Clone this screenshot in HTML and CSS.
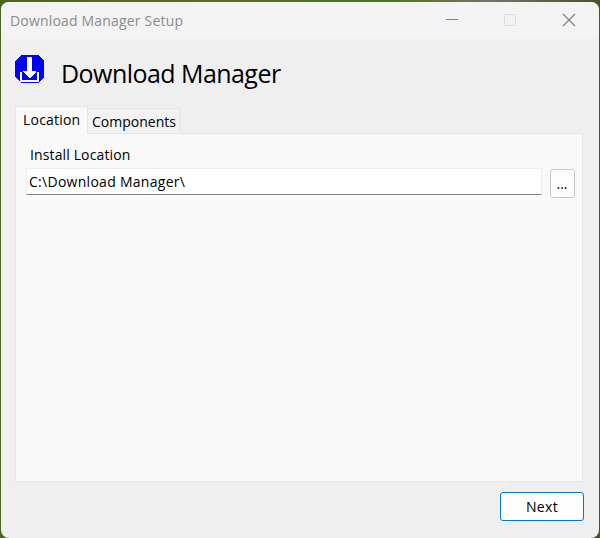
FILE: index.html
```html
<!DOCTYPE html>
<html lang="en">
<head>
<meta charset="utf-8">
<title>Download Manager Setup</title>
<link rel="stylesheet" href="styles.css">
</head>
<body>
<main class="window">
  <header class="titlebar">
    <span class="caption">Download Manager Setup</span>
    <svg class="controls" width="140" height="20" viewBox="0 0 140 20">
      <path d="M6 9.5H18" stroke="#858585"/>
      <rect x="64.5" y="4.500" width="11" height="11" rx="1" fill="none" stroke="#dcdcdc"/>
      <path d="M123 4L135 16M135 4L123 16" stroke="#818181" stroke-width="1.2"/>
    </svg>
  </header>
  <section class="brand">
    <svg class="logo" width="29" height="28" viewBox="0 0 29 28" shape-rendering="crispEdges">
      <path d="M6 0H23L29 6V22L23 28H6L0 22V6Z" fill="#00f"/>
      <path d="M12 2H17V16H21V17L15 23H14L8 17V16H12Z" fill="#fff"/>
      <path d="M5 17H7V25H22V17H24V27H5Z" fill="#fff"/>
    </svg>
    <h1 class="product">Download Manager</h1>
  </section>
  <nav class="tabs">
    <div class="tab active"><span class="tab-text">Location</span></div>
    <div class="tab"><span>Components</span></div>
  </nav>
  <section class="panel">
    <div class="label">Install Location</div>
    <div class="row">
      <div class="field"><span class="path-text">C:\Download Manager\</span></div>
      <button class="browse">...</button>
    </div>
  </section>
  <footer class="footer"><button class="next">Next</button></footer>
</main>
</body>
</html>
```
FILE: styles.css
```css
* { box-sizing: border-box; }
body {
  margin: 0;
  height: 538px;
  padding: 2px 1px 0;
  overflow: hidden;
  background: linear-gradient(90deg, #4c6420 0%, #5a6b2d 35%, #4f751b 65%, #77716a 82%, #45532c 100%);
  font: 14px/20px "Open Sans", "Noto Sans", sans-serif;
  color: #000;
}
.window {
  width: 598px;
  height: 536px;
  border-radius: 8px;
  background: #efefef;
  overflow: hidden;
}
.titlebar {
  display: flex;
  justify-content: space-between;
  height: 37px;
  padding: 8px 19px 0 9px;
  background: #f3f3f3;
  color: #8c8c8c;
}
.caption { padding-top: 1px; letter-spacing: 0.18px; }
.brand {
  display: flex;
  height: 67px;
  padding: 16px 0 0 14px;
}
.product {
  margin: 0 0 0 17px;
  font-size: 25px;
  line-height: 36px;
  font-weight: 400;
  letter-spacing: -0.55px;
  white-space: nowrap;
}
.tabs {
  display: flex;
  align-items: flex-end;
  height: 28px;
  margin-left: 14px;
}
.tab {
  width: 92px;
  height: 26px;
  padding: 3px 0 0 4px;
  border: 1px solid #e5e5e5;
  border-left: 0;
  background: #f2f2f2;
  white-space: nowrap;
}
.tab.active {
  width: 73px;
  height: 28px;
  padding: 3px 0 0 7px;
  border: 1px solid #e5e5e5;
  border-bottom: 0;
  background: #f9f9f9;
  z-index: 1;
}
.tab-text { letter-spacing: 0.2px; }
.panel {
  width: 568px;
  height: 349px;
  margin: -1px 0 0 14px;
  padding: 11px 7px 0 10px;
  border: 1px solid #e5e5e5;
  background: #f9f9f9;
}
.label { height: 23px; margin-left: 4px; letter-spacing: 0.13px; }
.row { display: flex; justify-content: space-between; }
.field {
  width: 516px;
  height: 27px;
  padding: 3px 2px;
  border: 1px solid #ebebeb;
  border-bottom-color: #868686;
  border-radius: 1px;
  background: #fff;
}
.path-text { letter-spacing: 0.28px; }
button { padding: 0; color: #000; background: #fdfdfd; font: inherit; }
.browse {
  width: 25px;
  height: 29px;
  margin-top: 1px;
  padding-right: 1px;
  border: 1px solid #c8c8c8;
  border-radius: 3px;
}
.footer { display: flex; justify-content: flex-end; padding: 10px 15px 0 0; }
.next { width: 84px; height: 29px; border: 1px solid #0078d4; border-radius: 3px; letter-spacing: 0.3px; }
```
